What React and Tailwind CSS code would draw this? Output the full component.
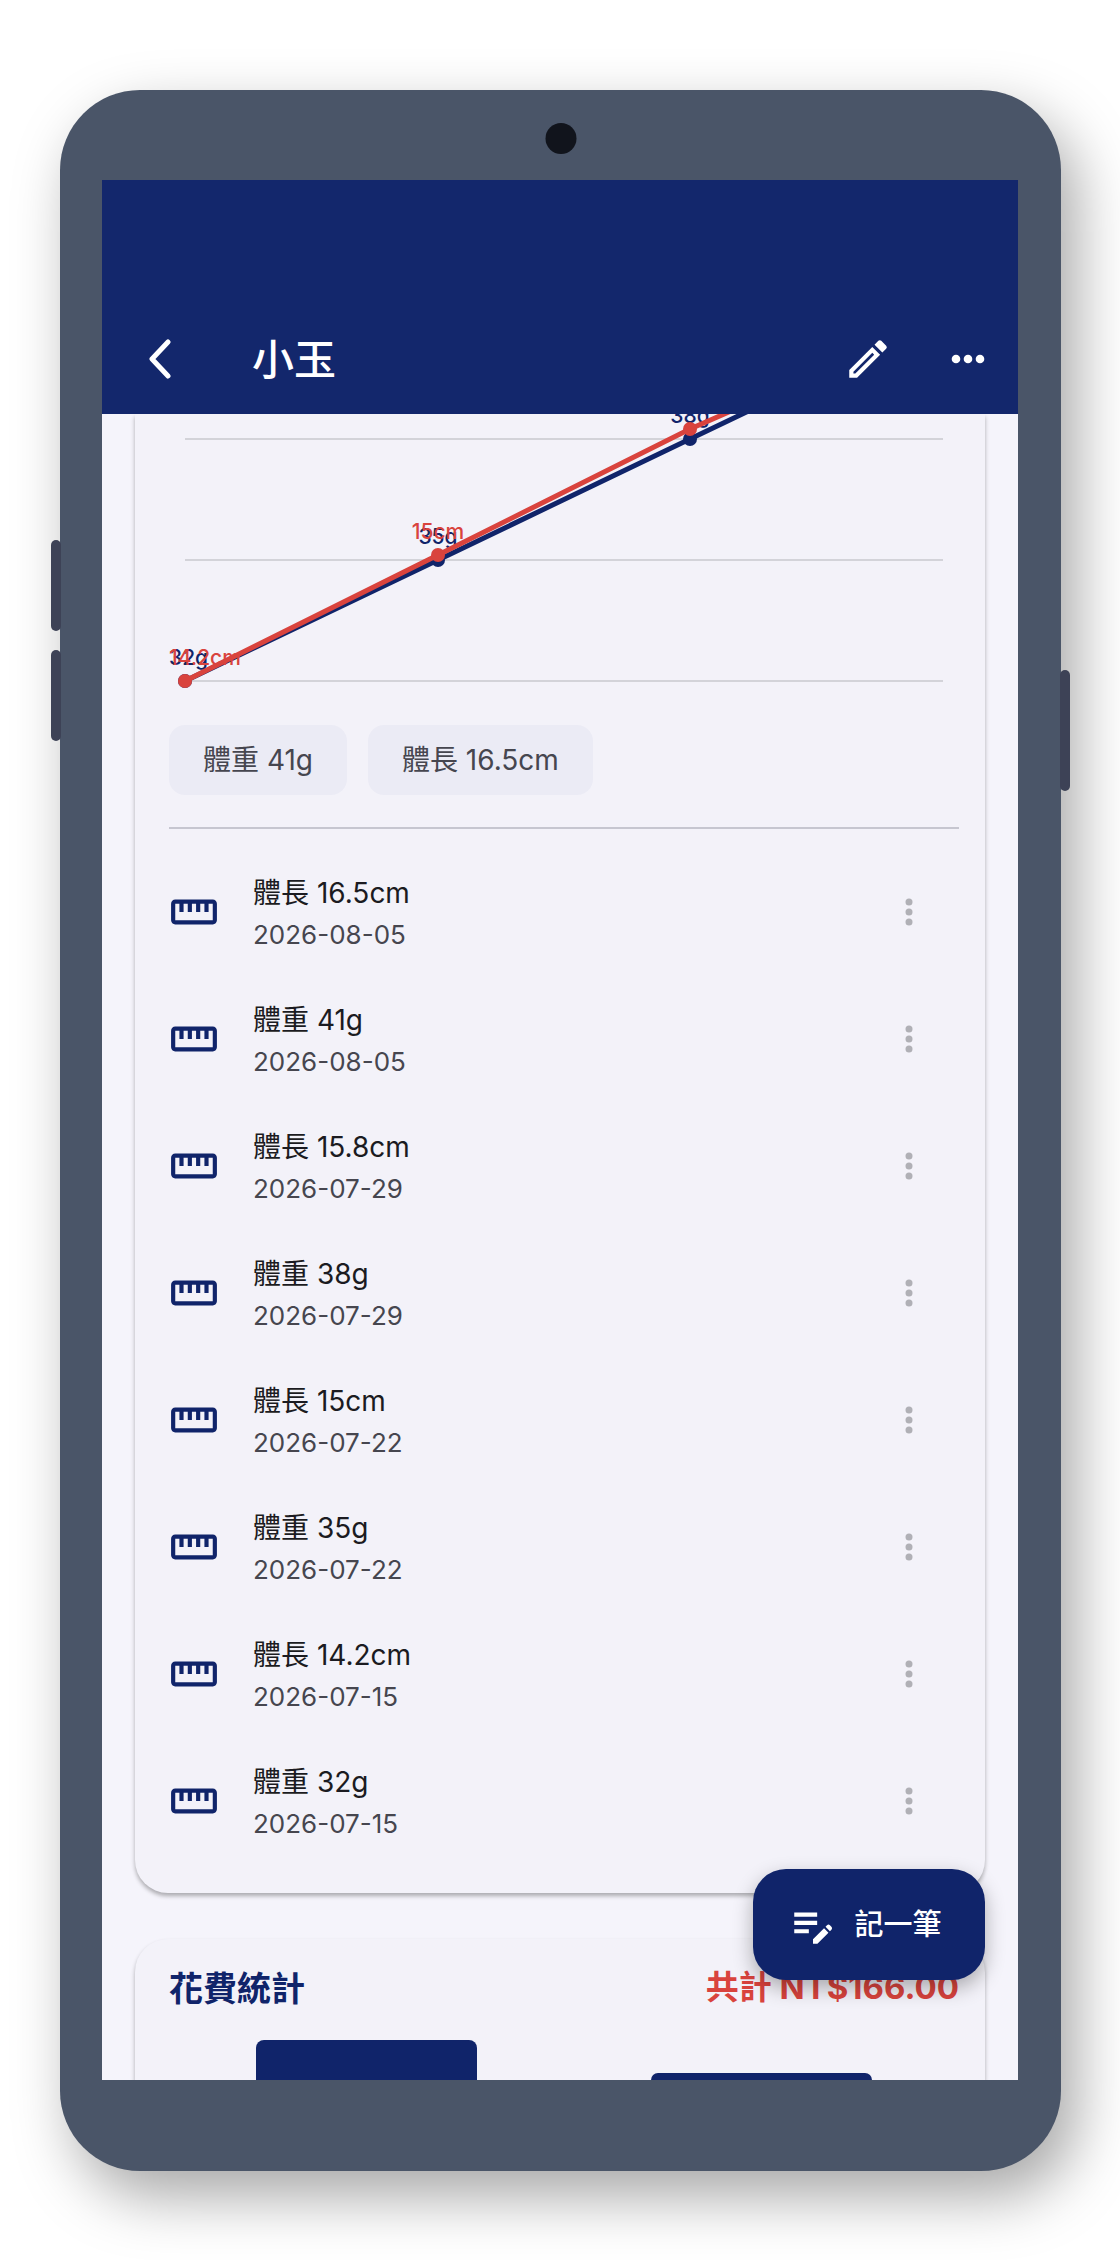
import { MdEditNote, MdOutlineEdit, MdOutlineStraighten } from "react-icons/md";

const records = [
  { id: 8, label: "體長 16.5cm", date: "2026-08-05" },
  { id: 7, label: "體重 41g", date: "2026-08-05" },
  { id: 6, label: "體長 15.8cm", date: "2026-07-29" },
  { id: 5, label: "體重 38g", date: "2026-07-29" },
  { id: 4, label: "體長 15cm", date: "2026-07-22" },
  { id: 3, label: "體重 35g", date: "2026-07-22" },
  { id: 2, label: "體長 14.2cm", date: "2026-07-15" },
  { id: 1, label: "體重 32g", date: "2026-07-15" },
];

const xs = [16, 269, 521, 774];
const weight = { color: "#10246a", ys: [267, 146, 25, -96], labels: ["32g", "35g", "38g"] };
const length = { color: "#d9433d", ys: [267, 141, 15, -96], labels: ["14.2cm", "15cm"] };

function Series({ data }) {
  return (
    <g fill={data.color}>
      <polyline
        points={xs.map((x, i) => `${x},${data.ys[i]}`).join(" ")}
        fill="none"
        stroke={data.color}
        strokeWidth="5"
      />
      {xs.map((x, i) => (
        <circle key={x} cx={x} cy={data.ys[i]} r="7" />
      ))}
      {data.labels.map((label, i) => (
        <text
          key={label}
          x={i === 0 ? 0 : xs[i]}
          y={data.ys[i] - 16}
          textAnchor={i === 0 ? "start" : "middle"}
          className="text-[21px] font-medium"
        >
          {label}
        </text>
      ))}
    </g>
  );
}

function GrowthChart() {
  return (
    <svg viewBox="0 0 790 280" className="block w-full" role="img" aria-label="體重 體長">
      {[25, 146, 267].map((y) => (
        <line key={y} x1="16" x2="774" y1={y} y2={y} stroke="#d3d3d9" strokeWidth="2" />
      ))}
      <Series data={weight} />
      <Series data={length} />
    </svg>
  );
}

function Chip({ children }) {
  return (
    <span className="flex h-[70px] items-center rounded-2xl bg-[#ebebf5] px-[34px] text-[28px] text-[#46464f]">
      {children}
    </span>
  );
}

function RecordRow({ label, date }) {
  return (
    <li className="flex h-[127px] items-center">
      <MdOutlineStraighten className="size-[50px] shrink-0 text-[#10246a]" />
      <div className="ml-[34px] flex-1 pt-1">
        <p className="text-[28px] leading-[41px] text-[#1b1b21]">{label}</p>
        <p className="text-[26px] leading-[41px] text-[#46464f]">{date}</p>
      </div>
      <button type="button" aria-label="更多" className="flex w-[100px] justify-center text-[#b0b0b6]">
        <svg viewBox="0 0 8 28" className="h-7 w-2" fill="currentColor">
          <circle cx="4" cy="4" r="3.5" />
          <circle cx="4" cy="14" r="3.5" />
          <circle cx="4" cy="24" r="3.5" />
        </svg>
      </button>
    </li>
  );
}

function AppBar() {
  return (
    <header className="relative z-10 flex h-[234px] items-end bg-[#13276c] px-[33px] pb-[23px] text-white">
      <div className="flex h-[64px] flex-1 items-center">
        <button type="button" aria-label="返回" className="flex w-[117px] pl-[13px]">
          <svg viewBox="0 0 24 40" className="h-10 w-6" fill="none" stroke="currentColor" strokeWidth="5" strokeLinecap="round" strokeLinejoin="round">
            <path d="M20 3L4 20L20 37" />
          </svg>
        </button>
        <h1 className="flex-1 text-[42px] font-medium">小玉</h1>
        <button type="button" aria-label="編輯">
          <MdOutlineEdit className="size-[50px]" />
        </button>
        <button type="button" aria-label="更多選項" className="ml-[58px]">
          <svg viewBox="0 0 34 10" className="h-[10px] w-[34px]" fill="currentColor">
            <circle cx="5" cy="5" r="4.3" />
            <circle cx="17" cy="5" r="4.3" />
            <circle cx="29" cy="5" r="4.3" />
          </svg>
        </button>
      </div>
    </header>
  );
}

export default function App() {
  return (
    <div className="bg-white px-[60px] pt-[90px] pb-[89px] font-['Inter','Noto_Sans_CJK_TC',sans-serif]">
      <div className="relative mr-[-1px] rounded-[80px] bg-[#4a5568] pt-[90px] pr-[43px] pb-[91px] pl-[42px] shadow-[15px_25px_60px_rgba(0,0,0,0.35)]">
        <span className="absolute top-[33px] left-1/2 size-[31px] -translate-x-1/2 rounded-full bg-[#11141c]" />
        <span className="absolute top-[450px] -left-[9px] h-[91px] w-[10px] rounded-full bg-[#3d4256]" />
        <span className="absolute top-[560px] -left-[9px] h-[91px] w-[10px] rounded-full bg-[#3d4256]" />
        <span className="absolute top-[580px] -right-[9px] h-[121px] w-[10px] rounded-full bg-[#3d4256]" />

        <div className="relative overflow-hidden bg-[#f5f4fb]">
          <AppBar />

          <main className="px-[33px]">
            <section className="rounded-b-[33px] bg-[#f3f2f9] pr-[26px] pb-[29px] pl-[34px] shadow-[0_3px_4px_rgba(0,0,0,0.3)]">
              <GrowthChart />
              <div className="mt-[31px] flex gap-[21px]">
                <Chip>體重 41g</Chip>
                <Chip>體長 16.5cm</Chip>
              </div>
              <hr className="mt-8 border-t-2 border-[#c6c6d0]" />
              <ul className="mt-[19px]">
                {records.map((record) => (
                  <RecordRow key={record.id} label={record.label} date={record.date} />
                ))}
              </ul>
            </section>

            <section className="mt-[46px] h-[141px] rounded-t-[33px] bg-[#f3f2f9] pt-[25px] pr-[26px] pl-[34px] shadow-[0_3px_4px_rgba(0,0,0,0.3)]">
              <div className="flex h-[48px] items-center justify-between font-bold">
                <h2 className="text-[34px] text-[#10246a]">花費統計</h2>
                <p className="text-[33px] text-[#d9433d]">共計 NT$166.00</p>
              </div>
              <div className="mt-[28px] flex h-[40px] items-start justify-between px-[87px]">
                <div className="h-full w-[221px] rounded-t-lg bg-[#10246a]" />
                <div className="mt-[33px] h-[7px] w-[221px] rounded-t-lg bg-[#10246a]" />
              </div>
            </section>
          </main>

          <button
            type="button"
            className="absolute right-[33px] bottom-[100px] flex h-[111px] w-[232px] items-center justify-center gap-4 rounded-[33px] bg-[#10246a] pr-2 text-[29px] font-medium text-white shadow-[0_8px_20px_rgba(0,0,0,0.3)]"
          >
            <MdEditNote className="size-[50px] shrink-0" />
            記一筆
          </button>
        </div>
      </div>
    </div>
  );
}
